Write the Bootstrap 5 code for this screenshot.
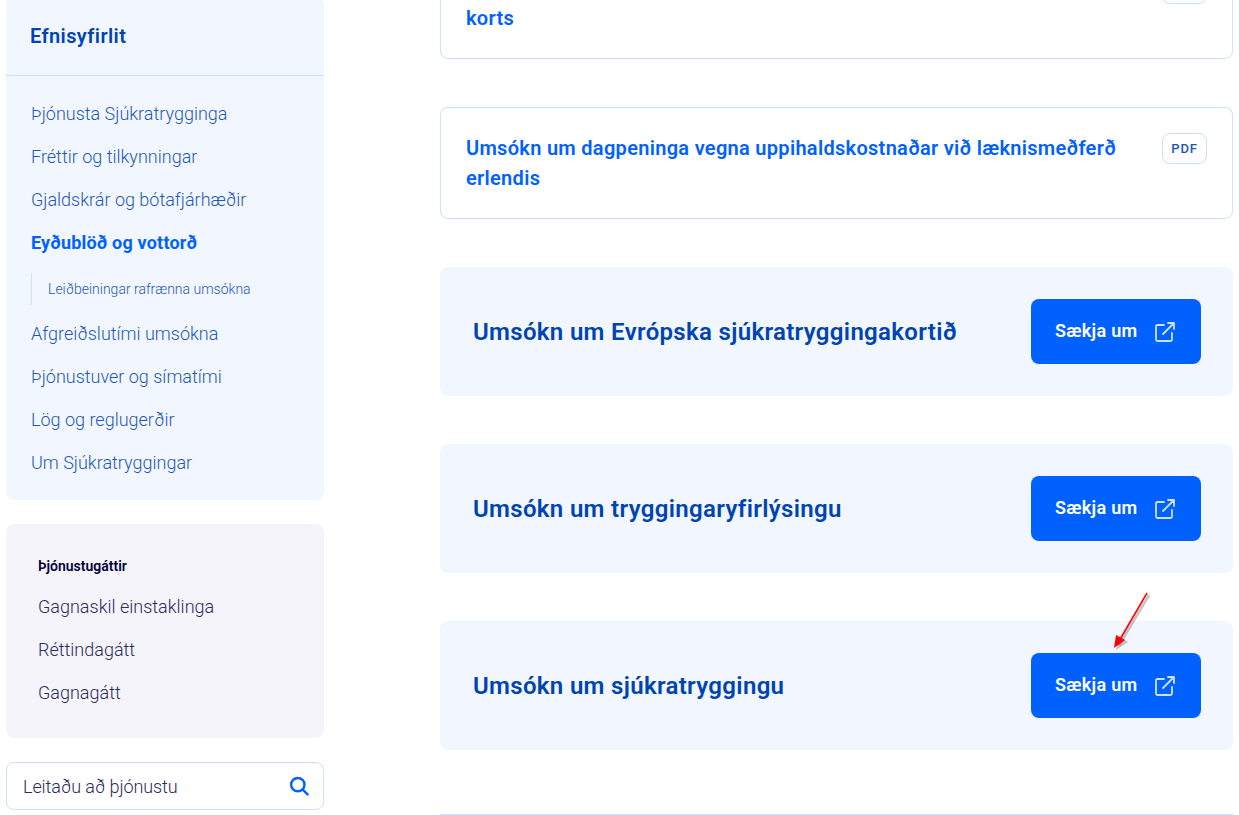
<!DOCTYPE html>
<html lang="is">
<head>
    <meta charset="UTF-8">
    <title>Eyðublöð og vottorð</title>
    <link href="https://cdn.jsdelivr.net/npm/bootstrap@5.3.0/dist/css/bootstrap.min.css" rel="stylesheet">
    <style>
        html, body { height: 815px; overflow: hidden; }
        body { font-family: "Roboto", "Liberation Sans", sans-serif; background: #fff; position: relative; }
        .page-wrap { margin-top: -53px; padding-left: 6px; gap: 116px; }
        .side-col { width: 318px; margin-top: 50px; flex-shrink: 0; }
        .main-col { width: 793px; flex-shrink: 0; }

        .toc-panel { background: #f2f7ff; border-radius: 8px; height: 503px; }
        .toc-head { height: 79px; padding: 26px 24px 0; border-bottom: 1px solid #cce0ff; font-size: 20px; line-height: 26px; font-weight: 600; letter-spacing: .4px; color: #0044b3; }
        .toc-list { padding-top: 17px; padding-left: 25px; }
        .toc-link { display: block; height: 43px; font-size: 18px; line-height: 42px; font-weight: 300; color: #1f57b8; text-decoration: none; }
        .toc-link.is-active { font-weight: 700; letter-spacing: .2px; color: #0061ff; }
        .toc-sub { display: block; height: 32px; margin: 8px 0 8px; padding-left: 16px; border-left: 1px solid #cce0ff; font-size: 14px; line-height: 32px; font-weight: 300; color: #1f57b8; text-decoration: none; }

        .portal-panel { background: #f5f4fa; border-radius: 8px; height: 214px; margin-top: 24px; padding: 32px 32px 0; }
        .portal-title { font-size: 14px; line-height: 20px; font-weight: 600; color: #00003c; margin-bottom: 9px; }
        .portal-link { display: block; height: 43px; font-size: 18px; line-height: 43px; font-weight: 300; color: #2b2b5e; text-decoration: none; }

        .search-box { height: 48px; margin-top: 24px; padding: 0 14px 0 16px; border: 1px solid #cce0ff; border-radius: 8px; background: #fff; }
        .search-box input { border: 0; outline: 0; padding: 0; width: 100%; font-size: 18px; font-weight: 300; letter-spacing: -.1px; background: transparent; }
        .search-box input::placeholder { color: #2b2b5e; opacity: 1; }

        .file-card { height: 112px; margin-bottom: 48px; padding: 25px 25px 0 25px; border: 1px solid #cce0ff; border-radius: 8px; }
        .file-card a { font-size: 20px; line-height: 30px; font-weight: 600; letter-spacing: .3px; color: #0061ff; text-decoration: none; }
        .pdf-tag { width: 45px; height: 31px; margin-left: 40px; flex-shrink: 0; border: 1px solid #cce0ff; border-radius: 8px; font-size: 13px; line-height: 29px; font-weight: 500; text-align: center; letter-spacing: .8px; color: #1a55bb; }

        .apply-card { height: 129px; margin-bottom: 48px; padding: 0 32px 0 33px; background: #f2f7ff; border-radius: 8px; }
        .apply-card h3 { margin: 1px 0 0; font-size: 24px; line-height: 32px; font-weight: 600; letter-spacing: .33px; color: #0044b3; }
        .apply-btn { width: 170px; height: 65px; border-radius: 8px; background: #0061ff; border: 0; color: #fff; font-size: 18px; font-weight: 600; letter-spacing: .3px; padding: 0 25px 2px 24px; }
        .apply-btn svg { display: block; margin-top: 2px; }
        .end-line { border-top: 1px solid #cce0ff; margin-top: 64px; }

        .red-arrow { position: absolute; left: 1105px; top: 585px; }
    </style>
</head>
<body>

<div class="d-flex page-wrap">
    <!-- Sidebar -->
    <aside class="side-col">
        <div class="toc-panel">
            <div class="toc-head">Efnisyfirlit</div>
            <nav class="toc-list">
                <a class="toc-link" href="#">Þjónusta Sjúkratrygginga</a>
                <a class="toc-link" href="#">Fréttir og tilkynningar</a>
                <a class="toc-link" href="#">Gjaldskrár og bótafjárhæðir</a>
                <a class="toc-link is-active" href="#">Eyðublöð og vottorð</a>
                <a class="toc-sub" href="#">Leiðbeiningar rafrænna umsókna</a>
                <a class="toc-link" href="#">Afgreiðslutími umsókna</a>
                <a class="toc-link" href="#">Þjónustuver og símatími</a>
                <a class="toc-link" href="#">Lög og reglugerðir</a>
                <a class="toc-link" href="#">Um Sjúkratryggingar</a>
            </nav>
        </div>

        <div class="portal-panel">
            <div class="portal-title">Þjónustugáttir</div>
            <a class="portal-link" href="#">Gagnaskil einstaklinga</a>
            <a class="portal-link" href="#">Réttindagátt</a>
            <a class="portal-link" href="#">Gagnagátt</a>
        </div>

        <div class="search-box d-flex align-items-center">
            <input type="text" placeholder="Leitaðu að þjónustu">
            <svg width="22" height="22" viewBox="0 0 22 22" fill="none" stroke="#0061ff" stroke-width="2.6" stroke-linecap="round"><circle cx="9.500" cy="9.500" r="7.200"/><path d="M14.800 14.800 20 20"/></svg>
        </div>
    </aside>

    <!-- Main -->
    <main class="main-col">
        <div class="file-card d-flex justify-content-between align-items-start">
            <div><a href="#">Umsókn um endurnýjun evrópska sjúkratrygginga<br>korts</a></div>
            <span class="pdf-tag">PDF</span>
        </div>
        <div class="file-card d-flex justify-content-between align-items-start">
            <div><a href="#">Umsókn um dagpeninga vegna uppihaldskostnaðar við læknismeðferð erlendis</a></div>
            <span class="pdf-tag">PDF</span>
        </div>

        <div class="apply-card d-flex justify-content-between align-items-center">
            <h3>Umsókn um Evrópska sjúkratryggingakortið</h3>
            <button class="btn apply-btn d-flex justify-content-between align-items-center">Sækja um
                <svg width="22" height="22" viewBox="0 0 22 22" fill="none" stroke="#cce0ff" stroke-width="1.8" stroke-linecap="round" stroke-linejoin="round"><path d="M10 4H3.500A1.500 1.500 0 0 0 2 5.500V18.500A1.500 1.500 0 0 0 3.500 20H16.500A1.500 1.500 0 0 0 18 18.500V12"/><path d="M9 13 20 2M14 2h6v6"/></svg>
            </button>
        </div>
        <div class="apply-card d-flex justify-content-between align-items-center">
            <h3>Umsókn um tryggingaryfirlýsingu</h3>
            <button class="btn apply-btn d-flex justify-content-between align-items-center">Sækja um
                <svg width="22" height="22" viewBox="0 0 22 22" fill="none" stroke="#cce0ff" stroke-width="1.8" stroke-linecap="round" stroke-linejoin="round"><path d="M10 4H3.500A1.500 1.500 0 0 0 2 5.500V18.500A1.500 1.500 0 0 0 3.500 20H16.500A1.500 1.500 0 0 0 18 18.500V12"/><path d="M9 13 20 2M14 2h6v6"/></svg>
            </button>
        </div>
        <div class="apply-card d-flex justify-content-between align-items-center">
            <h3>Umsókn um sjúkratryggingu</h3>
            <button class="btn apply-btn d-flex justify-content-between align-items-center">Sækja um
                <svg width="22" height="22" viewBox="0 0 22 22" fill="none" stroke="#cce0ff" stroke-width="1.8" stroke-linecap="round" stroke-linejoin="round"><path d="M10 4H3.500A1.500 1.500 0 0 0 2 5.500V18.500A1.500 1.500 0 0 0 3.500 20H16.500A1.500 1.500 0 0 0 18 18.500V12"/><path d="M9 13 20 2M14 2h6v6"/></svg>
            </button>
        </div>
        <div class="end-line"></div>
    </main>
</div>

<!-- annotation arrow laid over the screenshot -->
<svg class="red-arrow" width="50" height="70" viewBox="0 0 50 70">
    <path d="M44 10 14 60" stroke="#000" stroke-opacity=".22" stroke-width="3" fill="none"/>
    <path d="M11 65 14 51 23 57Z" fill="#000" fill-opacity=".22"/>
    <path d="M42 8 14 56" stroke="#f00" stroke-width="1.500" fill="none"/>
    <path d="M9 63 11 50 20 55Z" fill="#f00"/>
</svg>

<script src="https://cdn.jsdelivr.net/npm/bootstrap@5.3.0/dist/js/bootstrap.bundle.min.js"></script>
</body>
</html>
